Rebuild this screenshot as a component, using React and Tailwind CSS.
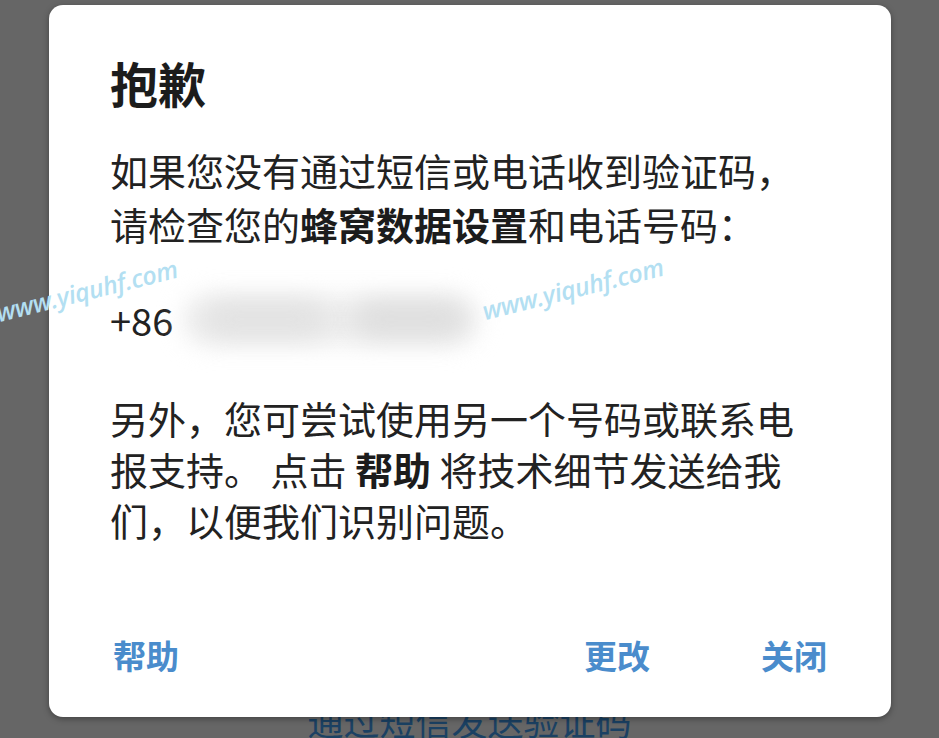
import React from "react";

const font = { fontFamily: '"Noto Sans CJK SC", "Noto Sans", sans-serif' };

function Watermark({ className }) {
  return (
    <div
      className={`absolute text-[25px] font-semibold italic tracking-[-0.3px] text-[#b3dff2] -rotate-[14deg] whitespace-nowrap pointer-events-none ${className}`}
      style={{ fontFamily: '"Open Sans", sans-serif' }}
    >
      www.yiquhf.com
    </div>
  );
}

export default function App() {
  return (
    <div className="relative w-[939px] h-[738px] overflow-hidden bg-[#666666]" style={font}>
      {/* page behind the modal */}
      <div className="flex h-full flex-col items-center justify-end">
        <div className="mb-[-6px] text-[36px] leading-[48px] text-[#1b4163]">通过短信发送验证码</div>
      </div>

      {/* modal */}
      <div className="absolute left-[49px] top-[5px] flex h-[712px] w-[842px] flex-col rounded-[14px] bg-white pl-[61px] pr-[64px] pt-[48px] pb-[38px] shadow-[0_2px_6px_rgba(0,0,0,0.35)]">
        <h1 className="text-[48px] font-bold leading-[58px] text-[#1c1c1c]">抱歉</h1>

        <p className="mt-[32px] whitespace-nowrap text-[38px] leading-[54px] text-[#222]">
          如果您没有通过短信或电话收到验证码，
          <br />
          请检查您的<b className="font-bold text-[#1c1c1c]">蜂窝数据设置</b>和电话号码：
        </p>

        <div className="mt-[37px] flex items-center">
          <span className="text-[38px] leading-[54px] text-[#222]">+86</span>
          <div className="relative ml-[2px] h-[64px] w-[310px]">
            <div className="absolute inset-x-[8px] inset-y-[8px] rounded-full bg-[#ececec] blur-md" />
            <div className="absolute left-[30px] top-[14px] h-[34px] w-[120px] rounded-full bg-[#e2e2e2] blur-md" />
            <div className="absolute left-[180px] top-[14px] h-[34px] w-[110px] rounded-full bg-[#dedede] blur-md" />
          </div>
        </div>

        <p className="mt-[40px] whitespace-nowrap text-[38px] leading-[51px] text-[#222]">
          另外，您可尝试使用另一个号码或联系电
          <br />
          报支持。 点击 <b className="font-bold text-[#1c1c1c]">帮助</b> 将技术细节发送给我
          <br />
          们，以便我们识别问题。
        </p>

        <div className="flex-1" />

        <div className="flex items-center">
          <button className="ml-[3px] text-[33px] font-bold leading-[48px] text-[#4a8ccc]">帮助</button>
          <div className="flex-1" />
          <button className="text-[33px] font-bold leading-[48px] text-[#4a8ccc]">更改</button>
          <button className="ml-[111px] text-[33px] font-bold leading-[48px] text-[#4a8ccc]">关闭</button>
        </div>
      </div>

      <Watermark className="left-[-6px] top-[272px]" />
      <Watermark className="left-[480px] top-[270px]" />
    </div>
  );
}
